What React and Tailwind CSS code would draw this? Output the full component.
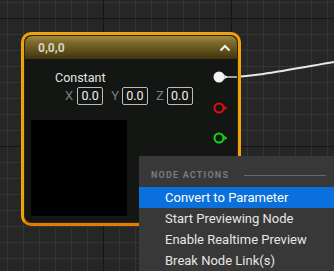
export default function App() {
  const Box = () => (
    <div className="w-[26px] h-[18px] border border-[#bdbdbd] rounded-[2px] flex items-center justify-center text-[12.5px] text-[#f0f0f0] leading-none">
      0.0
    </div>
  );
  return (
    <div
      className="relative w-[334px] h-[271px] overflow-hidden bg-[#262626] [background-image:linear-gradient(to_right,#151515_1px,transparent_1px),linear-gradient(to_bottom,#151515_1px,transparent_1px),linear-gradient(to_right,#343434_1px,transparent_1px),linear-gradient(to_bottom,#343434_1px,transparent_1px)] [background-size:128px_128px,128px_128px,16px_16px,16px_16px] [background-position:103px_18px,103px_18px,7px_2px,7px_2px]"
      style={{ fontFamily: "Roboto, 'Noto Sans', sans-serif" }}
    >
      <svg className="absolute inset-0" width="334" height="271">
        <path d="M228 77 C 252 77, 282 71, 334 62" stroke="#e8e8e8" strokeWidth="2" fill="none" />
      </svg>

      {/* Node */}
      <div className="absolute left-[21px] top-[32px] w-[220px] h-[194px] rounded-[10px] border-[3px] border-[#efa30b] border-b-[#e27c02] bg-[#2e2210] p-px">
        <div className="h-full rounded-[7px] bg-[#141613] flex flex-col overflow-hidden">
          <div className="h-[23px] flex-none flex items-center justify-between pl-[13px] pr-[6px] bg-[linear-gradient(to_bottom,#a08a3c_0%,#7a682a_30%,#5a4a18_70%,#3e3410_100%)]">
            <span className="text-[12px] font-bold text-[#d8d2bc] leading-none">0,0,0</span>
            <svg width="12" height="8" viewBox="0 0 12 8">
              <polyline points="1.5,6.5 6,2 10.5,6.5" stroke="#f2f2f2" strokeWidth="2" fill="none" />
            </svg>
          </div>
          <div className="flex flex-1 flex-row">
            <div className="flex-1 flex flex-col">
              <div className="ml-[30px] mt-[11px] h-[16px] leading-[16px] text-[12.5px] text-[#e4e4e4]">Constant</div>
              <div className="ml-[40px] mt-px h-[18px] flex items-center text-[13px] text-[#7c7c7c]">
                <span>X</span>
                <div className="ml-[4px]"><Box /></div>
                <span className="ml-[8px]">Y</span>
                <div className="ml-[3px]"><Box /></div>
                <span className="ml-[8px]">Z</span>
                <div className="ml-[3px]"><Box /></div>
              </div>
              <div className="ml-[6px] mt-[15px] w-[96px] h-[96px] bg-black" />
            </div>
            <div className="w-[24px] flex-none flex flex-col pt-[12px]">
              <svg width="24" height="12" viewBox="0 0 24 12">
                <line x1="13" y1="6" x2="24" y2="6" stroke="#cfcfcf" strokeWidth="1.5" />
                <circle cx="6" cy="6" r="5.5" fill="#f4f4f4" />
                <polygon points="11.3,3.5 14.3,6 11.3,8.5" fill="#f4f4f4" />
              </svg>
              <svg className="mt-[19px]" width="24" height="12" viewBox="0 0 24 12">
                <circle cx="6" cy="6" r="4.5" fill="none" stroke="#e00d0d" strokeWidth="2" />
                <polygon points="11.3,3.5 14.3,6 11.3,8.5" fill="#e00d0d" />
              </svg>
              <svg className="mt-[18px]" width="24" height="12" viewBox="0 0 24 12">
                <circle cx="6" cy="6" r="4.5" fill="none" stroke="#17d417" strokeWidth="2" />
                <polygon points="11.3,3.5 14.3,6 11.3,8.5" fill="#17d417" />
              </svg>
            </div>
          </div>
        </div>
      </div>

      {/* Context menu */}
      <div className="absolute left-[139px] top-[156px] right-0 bottom-0 bg-[#383838] flex flex-col">
        <div className="h-[31px] flex-none flex items-center pt-[7px] pl-[12px] pr-[8px]">
          <span className="text-[9px] font-bold tracking-[1.2px] text-[#7a7a7a] leading-none">NODE ACTIONS</span>
          <div className="ml-[15px] flex-1 h-px bg-[#686868]" />
        </div>
        <div className="h-[21px] flex items-center pl-[26px] bg-[#0a70dc] text-[13px] text-white">Convert to Parameter</div>
        <div className="h-[21px] flex items-center pl-[26px] text-[13px] text-[#e6e6e6]">Start Previewing Node</div>
        <div className="h-[21px] flex items-center pl-[26px] text-[13px] text-[#e6e6e6]">Enable Realtime Preview</div>
        <div className="h-[21px] flex items-center pl-[26px] text-[13px] text-[#e6e6e6]">Break Node Link(s)</div>
      </div>
    </div>
  );
}
